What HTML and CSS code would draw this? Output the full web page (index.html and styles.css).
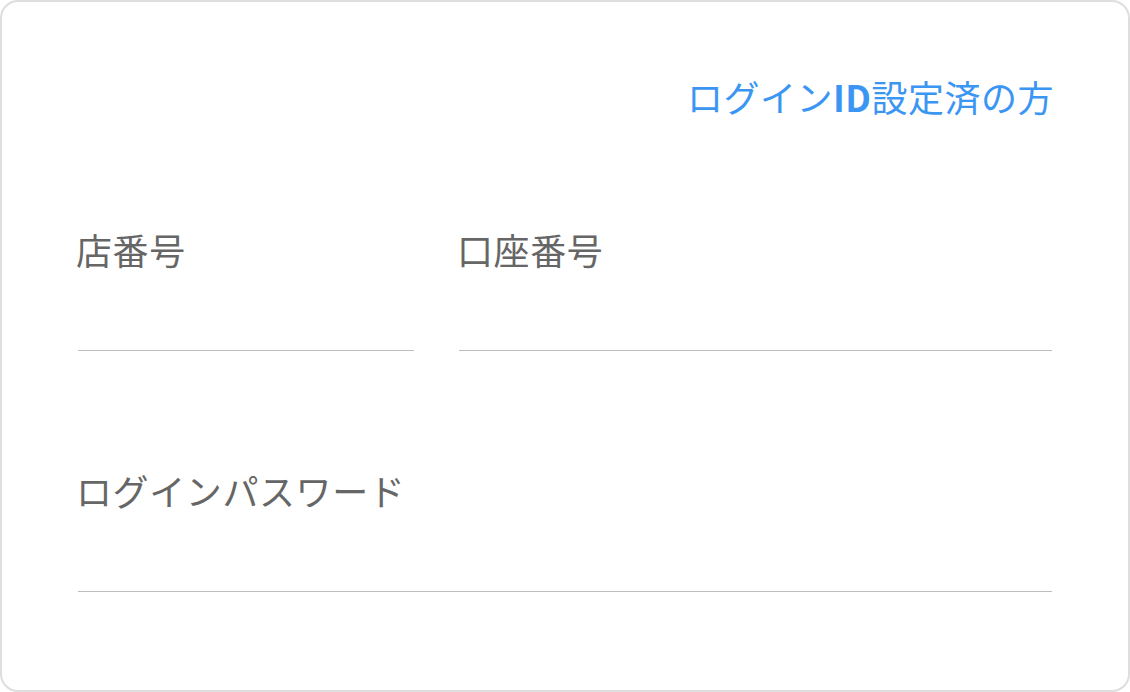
FILE: index.html
```html
<!DOCTYPE html>
<html lang="ja">
<head>
<meta charset="utf-8">
<link rel="stylesheet" href="styles.css">
</head>
<body>
<div class="card">
  <div class="link-row">
    <a class="link" href="#">ログイン<span class="latin">ID</span>設定済の方</a>
  </div>
  <div class="fields">
    <div class="field">
      <label class="label">店番号</label>
      <div class="input"></div>
    </div>
    <div class="field">
      <label class="label">口座番号</label>
      <div class="input"></div>
    </div>
    <div class="field full">
      <label class="label">ログインパスワード</label>
      <div class="input"></div>
    </div>
  </div>
</div>
</body>
</html>
```
FILE: styles.css
```css
html, body {
  margin: 0;
  padding: 0;
  background: #fff;
}
body {
  font-family: "Noto Sans CJK JP", "Noto Sans", sans-serif;
}
.card {
  box-sizing: border-box;
  width: 1130px;
  height: 692px;
  border: 2px solid #dedede;
  border-radius: 18px;
  padding: 67px 76px 0 76px;
  background: #fff;
}
.link-row {
  display: flex;
  justify-content: flex-end;
  height: 54px;
}
.link {
  color: #3b96f3;
  text-decoration: none;
  font-size: 36px;
  line-height: 54px;
  letter-spacing: 0.5px;
  margin-right: -2px;
}
.latin {
  font-weight: 700;
}
.fields {
  margin-top: 99px;
  display: grid;
  grid-template-columns: 336px 1fr;
  column-gap: 45px;
  row-gap: 112px;
}
.field.full {
  grid-column: 1 / -1;
}
.label {
  display: block;
  font-size: 36px;
  line-height: 54px;
  letter-spacing: 0.6px;
  color: #666666;
  margin-left: -2px;
}
.input {
  height: 74px;
  border-bottom: 1px solid #bdbdbd;
}
```
